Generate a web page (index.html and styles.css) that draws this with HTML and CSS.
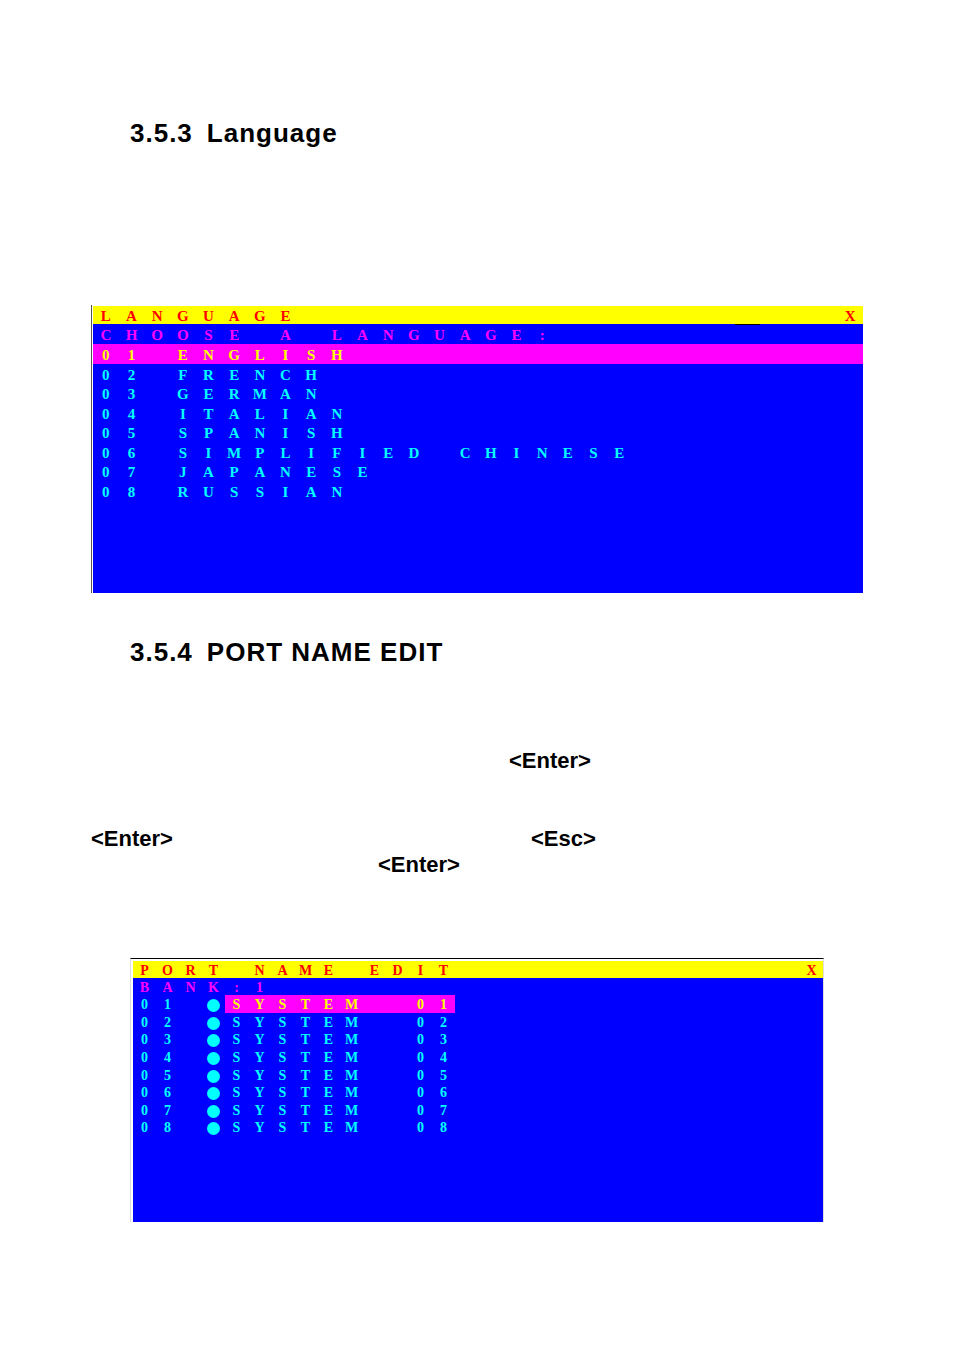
FILE: index.html
```html
<!DOCTYPE html>
<html lang="en">
<head>
    <meta charset="utf-8">
    <title>OSD Menus</title>
    <link rel="stylesheet" href="styles.css">
</head>
<body>
    <h2 class="heading"><span>3.5.3</span> <span>Language</span></h2>

    <div class="frame">
        <div class="screen language">
            <div class="row bar"><span class="cells">LANGUAGE</span><button type="button" class="close">X</button></div>
            <div class="row prompt"><span class="cells">CHOOSE A LANGUAGE:</span><span class="cursor"></span></div>
            <ul class="list">
                <li class="row selected"><span class="cells">01 ENGLISH</span></li>
                <li class="row"><span class="cells">02 FRENCH</span></li>
                <li class="row"><span class="cells">03 GERMAN</span></li>
                <li class="row"><span class="cells">04 ITALIAN</span></li>
                <li class="row"><span class="cells">05 SPANISH</span></li>
                <li class="row"><span class="cells">06 SIMPLIFIED CHINESE</span></li>
                <li class="row"><span class="cells">07 JAPANESE</span></li>
                <li class="row"><span class="cells">08 RUSSIAN</span></li>
            </ul>
        </div>
    </div>

    <h2 class="heading"><span>3.5.4</span> <span>PORT NAME EDIT</span></h2>

    <div class="keys">
        <p class="line first"><b>&lt;Enter&gt;</b></p>
        <p class="line second"><b>&lt;Enter&gt;</b><b>&lt;Esc&gt;</b></p>
        <p class="line third"><b>&lt;Enter&gt;</b></p>
    </div>

    <div class="frame ports-frame">
        <div class="screen ports">
            <div class="row bar"><span class="cells">PORT NAME EDIT</span><button type="button" class="close">X</button></div>
            <div class="row prompt"><span class="cells">BANK:1</span></div>
            <ul class="list">
                <li class="row"><span class="highlight"></span><span class="cells">01 *SYSTEM  01</span></li>
                <li class="row"><span class="cells">02 *SYSTEM  02</span></li>
                <li class="row"><span class="cells">03 *SYSTEM  03</span></li>
                <li class="row"><span class="cells">04 *SYSTEM  04</span></li>
                <li class="row"><span class="cells">05 *SYSTEM  05</span></li>
                <li class="row"><span class="cells">06 *SYSTEM  06</span></li>
                <li class="row"><span class="cells">07 *SYSTEM  07</span></li>
                <li class="row"><span class="cells">08 *SYSTEM  08</span></li>
            </ul>
        </div>
    </div>

    <script src="script.js"></script>
</body>
</html>
```

FILE: styles.css
```css
body {
    margin: 0;
    padding: 118px 91px 60px;
    background-color: #ffffff;
    color: #000000;
    font-family: Arial, "Liberation Sans", sans-serif;
}

.heading {
    display: flex;
    gap: 14px;
    margin: 0 39px;
    font-size: 26px;
    line-height: 30px;
    letter-spacing: 1px;
}

.frame {
    margin: 157px 0 44px;
    padding: 1px 0 0 1px;
    border-left: 1px solid #555555;
}

.ports-frame {
    margin: 80px 39px 0;
    padding: 2px 0 0 2px;
    border-top: 1px solid #000000;
    border-left: 1px solid #dddddd;
    border-right: 1px solid #dddddd;
}

.screen {
    background-color: #0000ff;
    color: #00ffff;
    font-family: "Liberation Serif", "Times New Roman", serif;
    font-weight: bold;
    font-size: 15px;
    line-height: 20px;
}

.language {
    padding-bottom: 93px;
}

.ports {
    padding-bottom: 86px;
    font-size: 14px;
}

/* every screen is 30 characters wide */
.row,
.cells {
    display: grid;
    grid-template-columns: repeat(30, 1fr);
}

.cells {
    grid-area: 1 / 1 / 2 / 31;
}

.cell {
    min-width: 0;
    text-align: center;
}

.bar {
    height: 18px;
    background-color: #ffff00;
    color: #ff0000;
}

.prompt {
    height: 20px;
    line-height: 22px;
    color: #ff00ff;
}

.ports .bar,
.ports .prompt {
    height: 17px;
    line-height: 20px;
}

.close {
    grid-area: 1 / 30 / 2 / 31;
    padding: 0;
    border: none;
    background: none;
    color: inherit;
    font: inherit;
    cursor: pointer;
}

.cursor {
    grid-area: 1 / 26 / 2 / 27;
    height: 1px;
    background-color: #000000;
}

.list {
    display: grid;
    grid-template-rows: repeat(8, 1fr);
    height: 156px;
    margin: 0;
    padding: 0;
    line-height: 15px;
    list-style: none;
}

.language .list .cells {
    padding-top: 4px;
}

.ports .list {
    height: 141px;
}

.ports .list .cells {
    padding-top: 2px;
}

.selected {
    background-color: #ff00ff;
    color: #ffff00;
}

.highlight {
    grid-area: 1 / 5 / 2 / 15;
    background-color: #ff00ff;
}

.highlight + .cells .cell:nth-child(n+5) {
    color: #ffff00;
}

.dot {
    width: 13px;
    height: 13px;
    margin: 2px auto 0;
    border-radius: 50%;
    background-color: #00ffff;
}

.keys {
    margin-top: 81px;
    font-size: 22px;
    line-height: 26px;
}

.line {
    display: flex;
    margin: 0;
}

.first {
    margin-bottom: 52px;
    padding-left: 418px;
}

.second {
    gap: 358px;
}

.third {
    padding-left: 287px;
}
```

FILE: script.js
```js
// put each character in its own column, "*" is the port status dot
document.querySelectorAll(".cells").forEach((line) => {
    const text = line.textContent;
    line.textContent = "";

    for (const char of text) {
        const cell = document.createElement("span");
        if (char === "*") {
            cell.className = "cell dot";
        } else {
            cell.className = "cell";
            cell.textContent = char;
        }
        line.appendChild(cell);
    }
});
```
